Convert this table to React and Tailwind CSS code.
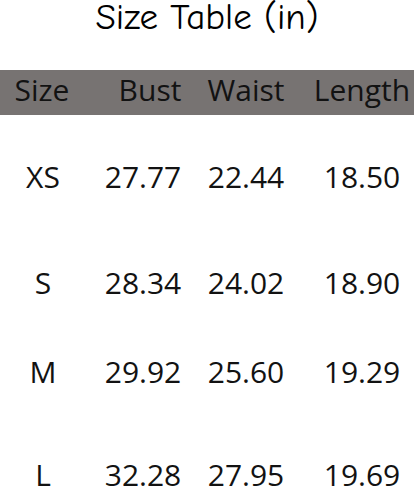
import React from 'react';

const rows = [
  { size: 'XS', bust: '27.77', waist: '22.44', length: '18.50', h: 'h-[106px]' },
  { size: 'S', bust: '28.34', waist: '24.02', length: '18.90', h: 'h-[89px]' },
  { size: 'M', bust: '29.92', waist: '25.60', length: '19.29', h: 'h-[103px]' },
  { size: 'L', bust: '32.28', waist: '27.95', length: '19.69', h: 'h-[40px]' },
];

const Row = ({ cells, className }) => (
  <div className={`grid grid-cols-[86px_114px_110px_104px] text-center leading-[30px] ${className}`}>
    <div>{cells[0]}</div>
    <div>{cells[1]}</div>
    <div className="pr-[18px]">{cells[2]}</div>
    <div>{cells[3]}</div>
  </div>
);

const App = () => {
  return (
    <div
      className="w-[414px] h-[488px] overflow-hidden bg-white text-[#121212]"
      style={{ fontFamily: '"Open Sans", "Noto Sans", sans-serif' }}
    >
      <h1
        className="-mt-[3px] text-center text-[37px] leading-[41px] font-medium text-black"
        style={{ fontFamily: '"Comic Sans MS", "Comic Neue", "DejaVu Sans", sans-serif' }}
      >
        Size Table (in)
      </h1>

      <div className="mt-[32px] h-[45px] bg-[#777372] pt-[5px] text-[30px]">
        <Row cells={['Size', 'Bust', 'Waist', 'Length']} className="[&>div:first-child]:pr-[2px] [&>div:nth-child(2)]:pl-[14px]" />
      </div>

      <div className="mt-[47px] text-[30px]">
        {rows.map((r) => (
          <Row key={r.size} cells={[r.size, r.bust, r.waist, r.length]} className={r.h} />
        ))}
      </div>
    </div>
  );
};

export default App;
